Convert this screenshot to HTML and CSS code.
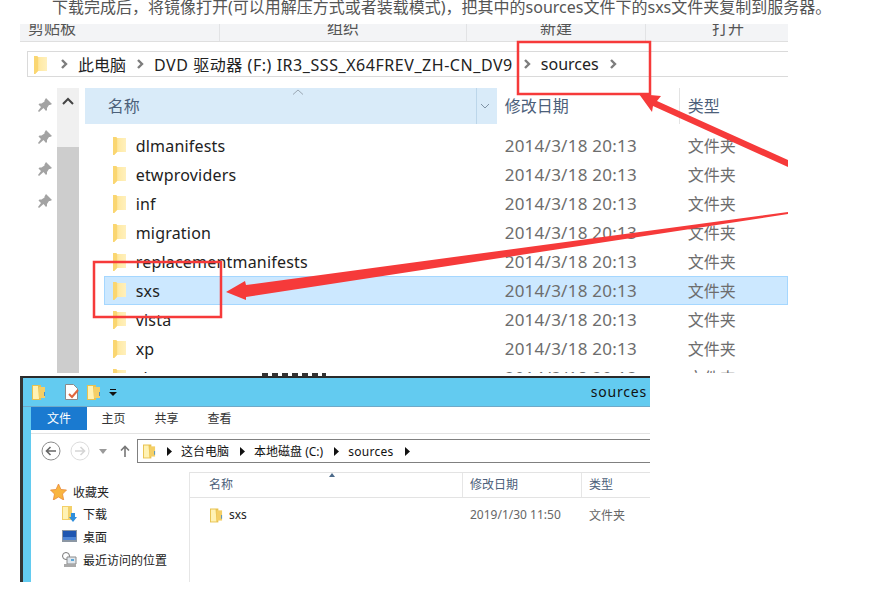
FILE: index.html
```html
<!DOCTYPE html>
<html lang="en">
<head>
    <meta charset="UTF-8">
    <meta name="viewport" content="width=device-width, initial-scale=1.0">
    <title>复制 sxs 文件夹</title>
    <link rel="stylesheet" href="styles.css">
</head>
<body>
    <svg class="defs" width="0" height="0">
        <linearGradient id="folder-fill" x1="0" x2="1" y1="0" y2="0">
            <stop offset="0" stop-color="#f8cf62"/>
            <stop offset=".45" stop-color="#ffeaa6"/>
            <stop offset="1" stop-color="#fff0bd"/>
        </linearGradient>
        <symbol id="folder" viewBox="0 0 13 19">
            <path d="M0 1h3l1 1h9v14H4l-3 3H0z" fill="url(#folder-fill)"/>
            <path d="M3 1l1 1v14l-3 3H0V1z" fill="#fad671"/>
        </symbol>
        <symbol id="folder2" viewBox="0 0 14 16">
            <path d="M0 1h9v15H0z" fill="#e8c24f"/>
            <path d="M1 2h5l1 13H1z" fill="#fff2b4"/>
            <path d="M7 3h6v11H7z" fill="#f4cf66"/>
            <path d="M12 8h1v4h-1z" fill="#4a90c8"/>
        </symbol>
        <symbol id="chev" viewBox="0 0 8 10">
            <path d="M2 1l4 4-4 4" fill="none" stroke="#7d7d7d" stroke-width="2.4"/>
        </symbol>
        <symbol id="tri" viewBox="0 0 5 9">
            <path d="M0 0l5 4.500L0 9z" fill="#111"/>
        </symbol>
        <symbol id="pin" viewBox="0 0 14 14">
            <path d="M8 0l6 6-2 1-1 0-2 3 0 2-1 1-2.500-3L1 14 0 13l3-4L.5 6.500l1-1 2 0 3-2 0-1z" fill="#a3a3a3"/>
        </symbol>
    </svg>

    <div class="page">
        <p class="intro">下载完成后，将镜像打开(可以用解压方式或者装载模式)，把其中的sources文件下的sxs文件夹复制到服务器。</p>

        <div class="shot-top">
            <div class="ribbon">
                <div class="ribbon-group group-clip">剪贴板</div>
                <div class="ribbon-group group-org">组织</div>
                <div class="ribbon-group group-new">新建</div>
                <div class="ribbon-group group-open">打开</div>
            </div>

            <div class="crumbs">
                <svg class="crumb-folder"><use href="#folder"/></svg>
                <svg class="chev"><use href="#chev"/></svg>
                <span>此电脑</span>
                <svg class="chev"><use href="#chev"/></svg>
                <span class="crumb-drive">DVD 驱动器 (F:) IR3_SSS_X64FREV_ZH-CN_DV9</span>
                <svg class="chev"><use href="#chev"/></svg>
                <span>sources</span>
                <svg class="chev"><use href="#chev"/></svg>
            </div>

            <div class="explorer">
                <div class="pins">
                    <svg class="pin"><use href="#pin"/></svg>
                    <svg class="pin"><use href="#pin"/></svg>
                    <svg class="pin"><use href="#pin"/></svg>
                    <svg class="pin"><use href="#pin"/></svg>
                </div>
                <div class="scrollbar">
                    <svg class="scroll-up" width="12" height="8" viewBox="0 0 12 8"><path d="M1 7l5-5 5 5" fill="none" stroke="#444" stroke-width="2"/></svg>
                    <div class="scroll-thumb"></div>
                </div>
                <div class="files">
                    <div class="file-head">
                        <div class="head-name">
                            <span>名称</span>
                            <svg class="head-caret" width="12" height="6" viewBox="0 0 12 6"><path d="M1 5.500l5-4.500 5 4.500" fill="none" stroke="#9aa7b3"/></svg>
                            <svg class="head-drop" width="10" height="6" viewBox="0 0 10 6"><path d="M1 1l4 4 4-4" fill="none" stroke="#7f93a6"/></svg>
                        </div>
                        <div class="head-date">修改日期</div>
                        <div class="head-type">类型</div>
                    </div>
                    <div class="rows">
                        <div class="row"><div class="name"><svg class="icon"><use href="#folder"/></svg>dlmanifests</div><div class="date">2014/3/18 20:13</div><div class="type">文件夹</div></div>
                        <div class="row"><div class="name"><svg class="icon"><use href="#folder"/></svg>etwproviders</div><div class="date">2014/3/18 20:13</div><div class="type">文件夹</div></div>
                        <div class="row"><div class="name"><svg class="icon"><use href="#folder"/></svg>inf</div><div class="date">2014/3/18 20:13</div><div class="type">文件夹</div></div>
                        <div class="row"><div class="name"><svg class="icon"><use href="#folder"/></svg>migration</div><div class="date">2014/3/18 20:13</div><div class="type">文件夹</div></div>
                        <div class="row"><div class="name"><svg class="icon"><use href="#folder"/></svg>replacementmanifests</div><div class="date">2014/3/18 20:13</div><div class="type">文件夹</div></div>
                        <div class="row selected"><div class="name"><svg class="icon"><use href="#folder"/></svg>sxs</div><div class="date">2014/3/18 20:13</div><div class="type">文件夹</div></div>
                        <div class="row"><div class="name"><svg class="icon"><use href="#folder"/></svg>vista</div><div class="date">2014/3/18 20:13</div><div class="type">文件夹</div></div>
                        <div class="row"><div class="name"><svg class="icon"><use href="#folder"/></svg>xp</div><div class="date">2014/3/18 20:13</div><div class="type">文件夹</div></div>
                        <div class="row"><div class="name"><svg class="icon"><use href="#folder"/></svg>zh-cn</div><div class="date">2014/3/18 20:13</div><div class="type">文件夹</div></div>
                    </div>
                </div>
            </div>
        </div>

        <div class="shot-gap"><div class="gap-scrap"></div></div>

        <div class="shot-bottom">
            <div class="titlebar">
                <svg class="tb-folder"><use href="#folder2"/></svg>
                <svg class="tb-doc" width="14" height="16" viewBox="0 0 14 16">
                    <path d="M.5.500h8l4 4v11H.500z" fill="#fff" stroke="#8a8a8a"/>
                    <path d="M4 10l3 3 6-7" fill="none" stroke="#e0663c" stroke-width="2"/>
                </svg>
                <svg class="tb-folder-b"><use href="#folder2"/></svg>
                <svg class="tb-drop" width="8" height="7" viewBox="0 0 8 7"><path d="M1 0h6v1H1zM0 3h8L4 7z" fill="#111"/></svg>
                <span class="tb-title">sources</span>
            </div>
            <div class="window">
                <div class="tabs">
                    <div class="tab active">文件</div>
                    <div class="tab">主页</div>
                    <div class="tab">共享</div>
                    <div class="tab">查看</div>
                </div>
                <div class="navbar">
                    <svg class="nav-btn" width="20" height="20" viewBox="0 0 20 20">
                        <circle cx="10" cy="10" r="9" fill="#fff" stroke="#8c8c8c"/>
                        <path d="M15 10H6M9.500 6l-4 4 4 4" fill="none" stroke="#666" stroke-width="1.600"/>
                    </svg>
                    <svg class="nav-btn fwd" width="20" height="20" viewBox="0 0 20 20">
                        <circle cx="10" cy="10" r="9" fill="#fff" stroke="#dcdcdc"/>
                        <path d="M5 10h9M10.500 6l4 4-4 4" fill="none" stroke="#d5d5d5" stroke-width="1.600"/>
                    </svg>
                    <svg class="nav-drop" width="8" height="5" viewBox="0 0 8 5"><path d="M0 0h8L4 5z" fill="#9a9a9a"/></svg>
                    <svg class="nav-up" width="10" height="12" viewBox="0 0 10 12"><path d="M5 12V2M1 5.500l4-4 4 4" fill="none" stroke="#777" stroke-width="1.600"/></svg>
                    <div class="path">
                        <svg class="path-folder"><use href="#folder2"/></svg>
                        <svg class="tri"><use href="#tri"/></svg>
                        <span>这台电脑</span>
                        <svg class="tri"><use href="#tri"/></svg>
                        <span>本地磁盘 (C:)</span>
                        <svg class="tri"><use href="#tri"/></svg>
                        <span class="path-last">sources</span>
                        <svg class="tri"><use href="#tri"/></svg>
                    </div>
                </div>
                <div class="panes">
                    <div class="tree">
                        <div class="tree-fav">
                            <svg width="17" height="16" viewBox="0 0 17 16"><path d="M8.500 0l2.500 5.500 5.500.5-4 4 1.200 6-5.200-3-5.200 3 1.200-6-4-4 5.500-.5z" fill="#f9b53f" stroke="#e8893a" stroke-width=".8"/></svg>
                            <span>收藏夹</span>
                        </div>
                        <div class="tree-item">
                            <svg width="15" height="16" viewBox="0 0 15 16"><path d="M0 0h10v14H0z" fill="#f3d069"/><path d="M1 1h5v12H1z" fill="#fff2b4"/><path d="M9 7h4v4h2l-4 5-4-5h2z" fill="#2f8fdc"/></svg>
                            <span>下载</span>
                        </div>
                        <div class="tree-item">
                            <svg width="15" height="13" viewBox="0 0 15 13"><path d="M0 0h15v12H0z" fill="#8c97a3"/><path d="M1 1h13v9H1z" fill="#1f56b0"/><path d="M1 7h13v3H1z" fill="#4f86d6"/></svg>
                            <span>桌面</span>
                        </div>
                        <div class="tree-item">
                            <svg width="15" height="15" viewBox="0 0 15 15"><circle cx="4" cy="4" r="3.500" fill="#fff" stroke="#777"/><path d="M5 5h9v7H5z" fill="#dfe6ec" stroke="#8b8b8b"/><path d="M9 7h3v2H9z" fill="#5aa7d8"/><path d="M2 12h12v3H2z" fill="#a9a9a9"/></svg>
                            <span>最近访问的位置</span>
                        </div>
                    </div>
                    <div class="list">
                        <div class="list-head">
                            <div class="lh-name">名称<svg class="lh-caret" width="6" height="4" viewBox="0 0 6 4"><path d="M0 4l3-4 3 4z" fill="#4c6a8a"/></svg></div>
                            <div class="lh-date">修改日期</div>
                            <div class="lh-type">类型</div>
                        </div>
                        <div class="list-row">
                            <div class="lr-name"><svg class="lr-icon"><use href="#folder2"/></svg>sxs</div>
                            <div class="lr-date">2019/1/30 11:50</div>
                            <div class="lr-type">文件夹</div>
                        </div>
                    </div>
                </div>
            </div>
        </div>

        <!-- red marks drawn over the screenshots -->
        <svg class="marks" width="894" height="589" viewBox="0 0 894 589">
            <rect x="518" y="42" width="132" height="52" fill="none" stroke="#f63a3a" stroke-width="2.500"/>
            <rect x="94" y="262" width="127" height="55" fill="none" stroke="#f63a3a" stroke-width="2.500"/>
            <polygon points="639,94 661,96 657,101 788,160 788,167 653,106 652,112" fill="#f63a3a"/>
            <polygon points="226,292 245,281 246,285 788,212 788,214 246,297 246,300" fill="#f63a3a"/>
        </svg>
    </div>
</body>
</html>
```

FILE: styles.css
```css
* { margin: 0; padding: 0; box-sizing: border-box; }
body { font-family: "Noto Sans", "Noto Sans CJK SC", sans-serif; background: #fff; overflow: hidden; }
svg { display: block; flex: none; }
.defs { position: absolute; }
.page { position: relative; width: 894px; height: 589px; overflow: hidden; }
.marks { position: absolute; left: 0; top: 0; }

.intro { height: 24px; padding-left: 52px; font-size: 16px; line-height: 14px; color: #555; white-space: nowrap; }

/* upper screenshot */
.shot-top { width: 768px; height: 349px; margin-left: 20px; overflow: hidden; background: #fff; }
.ribbon { display: flex; height: 18px; background: #f3f4f6; border-bottom: 1px solid #dfdfdf; }
.ribbon-group { height: 17px; overflow: hidden; font-size: 16px; line-height: 8px; color: #555; text-align: center; border-right: 1px solid #e2e3e5; }
.group-clip { width: 200px; padding-right: 152px; padding-left: 8px; white-space: nowrap; }
.group-org { width: 247px; }
.group-new { width: 179px; }
.group-open { width: 142px; border-right: none; padding-left: 22px; }

.crumbs { display: flex; align-items: center; height: 26px; margin: 9px 0 0 7px; padding-left: 6px; border: 1px solid #dadada; border-right: none; font-size: 16px; color: #222; white-space: nowrap; }
.crumb-folder { width: 13px; height: 19px; margin-right: 3px; }
.chev { width: 8px; height: 10px; margin: 0 10px; }
.crumb-drive { letter-spacing: .55px; }

.explorer { display: flex; margin-top: 11px; }
.pins { display: flex; flex-direction: column; gap: 18px; width: 37px; padding: 10px 0 0 18px; }
.pin { width: 14px; height: 14px; }
.scrollbar { width: 22px; height: 285px; background: #f0f0f0; }
.scroll-up { margin: 9px 0 0 5px; }
.scroll-thumb { height: 268px; margin-top: 42px; background: #cdcdcd; }
.files { width: 709px; margin-left: 6px; }
.file-head { display: flex; height: 36px; font-size: 16px; line-height: 36px; color: #4c607a; }
.head-name { position: relative; width: 412px; padding-left: 23px; background: #d9ebf9; }
.head-caret { position: absolute; left: 207px; top: 1px; }
.head-drop { position: absolute; left: 395px; top: 15px; }
.head-name::after { content: ""; position: absolute; left: 391px; top: 0; width: 1px; height: 36px; background: #bcd6ea; }
.head-date { width: 183px; padding-left: 8px; border-right: 1px solid #e3e3e3; }
.head-type { padding-left: 8px; }
.rows { margin-top: 7px; }
.row { display: grid; grid-template-columns: 401px 183px 1fr; align-items: center; height: 29px; margin-left: 19px; font-size: 16px; color: #222; }
.row.selected { background: #cce8ff; box-shadow: inset 0 0 0 1px #a5d7ff; }
.name { display: flex; align-items: center; padding-left: 9px; letter-spacing: .2px; }
.icon { width: 13px; height: 19px; margin-right: 10px; }
.date, .type { color: #6d6d6d; }
.date { font-size: 17px; letter-spacing: .25px; }
.type { margin-top: -2px; }

/* strip between the two pictures */
.shot-gap { height: 3px; margin-left: 262px; }
.gap-scrap { width: 64px; height: 3px; background: repeating-linear-gradient(90deg, #333 0 6px, #fff 6px 10px); }

/* lower screenshot */
.shot-bottom { width: 630px; height: 206px; margin-left: 20px; background: #63cbf0; border-left: 3px solid #333; border-top: 2px solid #2a2a2a; padding-left: 8px; display: flex; flex-direction: column; overflow: hidden; }
.titlebar { display: flex; align-items: center; flex: none; height: 29px; margin-left: -8px; padding: 0 3px 0 9px; border-bottom: 1px solid #6fa9c8; }
.tb-folder { width: 14px; height: 16px; }
.tb-doc { margin-left: 19px; }
.tb-folder-b { width: 14px; height: 16px; margin-left: 8px; }
.tb-drop { margin-left: 8px; }
.tb-title { margin: -2px 0 0 auto; font-size: 14px; letter-spacing: .8px; color: #111; }
.window { flex: 1; background: #fff; display: flex; flex-direction: column; }
.tabs { display: flex; height: 27px; border-bottom: 1px solid #e3e3e3; font-size: 12px; line-height: 23px; color: #333; flex: none; }
.tab { width: 53px; height: 23px; text-align: center; }
.tab.active { width: 56px; background: #1a7ad0; color: #fff; }
.navbar { display: flex; align-items: center; height: 38px; flex: none; padding: 5px 0 9px 10px; }
.nav-btn { margin-right: 9px; }
.nav-up { margin-left: 13px; }
.path { display: flex; align-items: center; flex: 1; height: 24px; margin-left: 7px; padding-left: 5px; border: 1px solid #808080; border-right: none; font-size: 12px; color: #111; white-space: nowrap; }
.path-folder { width: 13px; height: 16px; margin-right: 11px; }
.tri { width: 5px; height: 9px; margin-right: 9px; }
.path span { margin-right: 11px; }
.path-last { letter-spacing: .3px; }
.panes { display: flex; flex: 1; }
.tree { width: 159px; height: 110px; border-right: 1px solid #e6e6e6; font-size: 12px; color: #222; padding: 11px 0 0 19px; }
.tree-fav { display: flex; align-items: center; gap: 6px; height: 18px; }
.tree-item { display: flex; align-items: center; gap: 6px; height: 23px; margin-left: 12px; }
.tree-fav + .tree-item { margin-top: 1px; }
.list { flex: 1; }
.list-head { display: flex; height: 26px; border-top: 1px solid #e3e3e3; border-bottom: 1px solid #e3e3e3; font-size: 12px; line-height: 24px; color: #4c607a; }
.lh-name { position: relative; width: 273px; padding-left: 19px; border-right: 1px solid #e6e6e6; }
.lh-caret { position: absolute; left: 139px; top: 0; }
.lh-date { width: 119px; padding-left: 7px; border-right: 1px solid #e6e6e6; }
.lh-type { padding-left: 7px; }
.list-row { display: flex; align-items: center; height: 33px; font-size: 12px; color: #666; }
.lr-name { display: flex; align-items: center; width: 280px; padding-left: 20px; color: #222; }
.lr-icon { width: 13px; height: 16px; margin-right: 6px; }
.lr-date { width: 119px; }
```
